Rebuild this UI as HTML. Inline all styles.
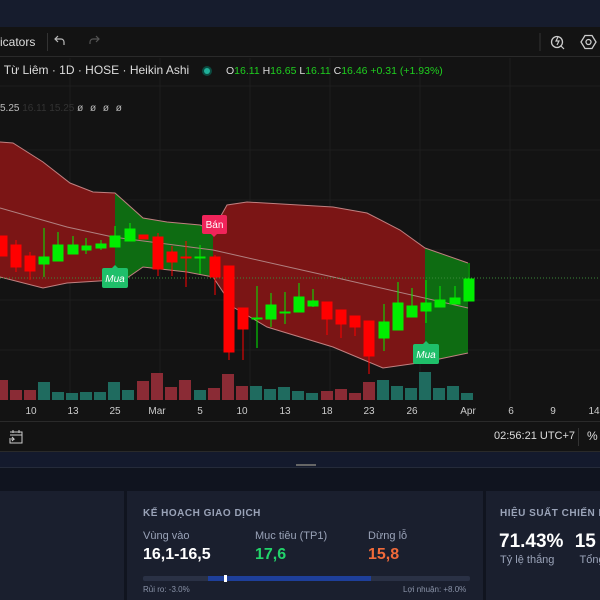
<!DOCTYPE html>
<html><head><meta charset="utf-8"><style>
*{margin:0;padding:0;box-sizing:border-box}
html,body{width:600px;height:600px;overflow:hidden}
body{background:#131313;font-family:"Liberation Sans","DejaVu Sans",sans-serif;position:relative}
.abs{position:absolute}
#wrap{position:absolute;left:0;top:0;width:600px;height:600px;overflow:hidden}
</style></head><body><div id="wrap">
<div class="abs" style="left:0;top:0;width:600px;height:27px;background:#161c2d"></div>
<div class="abs" style="left:0;top:27px;width:600px;height:30px;background:#131313;border-bottom:1px solid #2a2a2a"></div>
<div class="abs" style="left:0;top:35px;color:#ddd;font-size:12px">icators</div>
<div class="abs" style="left:47px;top:33px;width:1px;height:18px;background:#333"></div>
<svg class="abs" style="left:0;top:0" width="600" height="600">
<path d="M58 42 l-3 -3 l3 -3 M55 39 h6 a3 3 0 0 1 3 3 v3" stroke="#bbb" fill="none" stroke-width="1.2"/>
<path d="M96 36 l3 3 l-3 3 M99 39 h-6 a3 3 0 0 0 -3 3 v2" stroke="#555" fill="none" stroke-width="1.2"/>
<line x1="540" y1="33" x2="540" y2="51" stroke="#333"/>
<circle cx="557" cy="42" r="5.5" stroke="#ccc" fill="none" stroke-width="1.3"/>
<path d="M561 46 l3 3 M558 37 l-2 4 h3 l-2 4" stroke="#ccc" fill="none" stroke-width="1.2"/>
<path d="M581 42 l4 -6.5 h7 l4 6.5 l-4 6.5 h-7z" stroke="#ccc" fill="none" stroke-width="1.3"/>
<circle cx="588.5" cy="42" r="2.5" stroke="#ccc" fill="none" stroke-width="1.3"/>
<g stroke="#1e1e1e" stroke-width="1">
<line x1="0" y1="86" x2="600" y2="86"/><line x1="0" y1="150" x2="600" y2="150"/><line x1="0" y1="200" x2="600" y2="200"/><line x1="0" y1="250" x2="600" y2="250"/><line x1="0" y1="300" x2="600" y2="300"/><line x1="0" y1="350" x2="600" y2="350"/>
<line x1="70" y1="58" x2="70" y2="400"/><line x1="160" y1="58" x2="160" y2="400"/><line x1="250" y1="58" x2="250" y2="400"/><line x1="330" y1="58" x2="330" y2="400"/><line x1="420" y1="58" x2="420" y2="400"/><line x1="510" y1="58" x2="510" y2="400"/>
</g>
<path d="M0 142 L13 143 L43 162 L70 183 L93 192 L115 193 L115 280 L67 283 L43 288 L0 277Z" fill="#7b1515"/>
<path d="M115 193 L143 218 L167 222 L200 225 L213 230 L213 277 L187 272 L143 267 L127 278 L115 280Z" fill="#0e6c12"/>
<path d="M213 230 L227 205 L247 202 L333 207 L367 213 L400 230 L425 248 L425 362 L383 368 L333 347 L267 327 L233 307 L213 277Z" fill="#7b1515"/>
<path d="M425 248 L468 263 L468 353 L425 362Z" fill="#0e6c12"/>
<path d="M0 142 L13 143 L43 162 L70 183 L93 192 L115 193 L143 218 L167 222 L200 225 L213 230 L227 205 L247 202 L333 207 L367 213 L400 230 L425 248 L468 263" stroke="#c08080" fill="none" stroke-width="1"/>
<path d="M0 277 L43 288 L67 283 L115 280 L127 278 L143 267 L187 272 L213 277 L233 307 L267 327 L333 347 L383 368 L425 362 L468 353" stroke="#c08080" fill="none" stroke-width="1"/>
<path d="M0 208 L67 227 L113 237 L213 250 L333 277 L468 308" stroke="#b08080" fill="none" stroke-width="1"/>
<line x1="0" y1="278" x2="600" y2="278" stroke="#3a8a3a" stroke-dasharray="1 2"/>
<g fill="#8a2b35">
<rect x="0" y="380" width="8" height="20"/><rect x="10" y="390" width="12" height="10"/><rect x="24" y="390" width="12" height="10"/>
<rect x="137" y="381" width="12" height="19"/><rect x="151" y="373" width="12" height="27"/><rect x="165" y="387" width="12" height="13"/><rect x="179" y="380" width="12" height="20"/>
<rect x="208" y="388" width="12" height="12"/><rect x="222" y="374" width="12" height="26"/><rect x="236" y="386" width="12" height="14"/>
<rect x="321" y="391" width="12" height="9"/><rect x="335" y="389" width="12" height="11"/><rect x="349" y="393" width="12" height="7"/><rect x="363" y="382" width="12" height="18"/>
</g>
<g fill="#1f6b5f">
<rect x="38" y="382" width="12" height="18"/><rect x="52" y="392" width="12" height="8"/><rect x="66" y="393" width="12" height="7"/><rect x="80" y="392" width="12" height="8"/><rect x="94" y="392" width="12" height="8"/><rect x="108" y="382" width="12" height="18"/><rect x="122" y="390" width="12" height="10"/>
<rect x="194" y="390" width="12" height="10"/>
<rect x="250" y="386" width="12" height="14"/><rect x="264" y="389" width="12" height="11"/><rect x="278" y="387" width="12" height="13"/><rect x="292" y="391" width="12" height="9"/><rect x="306" y="393" width="12" height="7"/>
<rect x="377" y="380" width="12" height="20"/><rect x="391" y="386" width="12" height="14"/><rect x="405" y="388" width="12" height="12"/><rect x="419" y="372" width="12" height="28"/><rect x="433" y="388" width="12" height="12"/><rect x="447" y="386" width="12" height="14"/><rect x="461" y="393" width="12" height="7"/>
</g>
<g fill="#ccc" font-size="10" text-anchor="middle">
<text x="31" y="414">10</text><text x="73" y="414">13</text><text x="115" y="414">25</text><text x="157" y="414">Mar</text><text x="200" y="414">5</text><text x="242" y="414">10</text><text x="285" y="414">13</text><text x="327" y="414">18</text><text x="369" y="414">23</text><text x="412" y="414">26</text><text x="468" y="414">Apr</text><text x="511" y="414">6</text><text x="553" y="414">9</text><text x="594" y="414">14</text>
</g>
<line x1="0" y1="421.5" x2="600" y2="421.5" stroke="#2a2a2a"/>
</svg>
<div class="abs" style="left:-2px;top:63px;font-size:12px;color:#ddd;white-space:nowrap">ị Từ Liêm · 1D · HOSE · Heikin Ashi</div>
<div class="abs" style="left:202px;top:66px;width:10px;height:10px;border-radius:50%;background:#0b4a40"><div style="margin:2px;width:6px;height:6px;border-radius:50%;background:#20b09a"></div></div>
<div class="abs" style="left:226px;top:65px;font-size:10.5px;color:#ddd;white-space:nowrap">O<span style="color:#1fd01f">16.11</span> H<span style="color:#1fd01f">16.65</span> L<span style="color:#1fd01f">16.11</span> C<span style="color:#1fd01f">16.46</span> <span style="color:#1fd01f">+0.31 (+1.93%)</span></div>
<div class="abs" style="left:0;top:103px;font-size:10px;color:#bbb;white-space:nowrap">5.25 <span style="color:#333">16.11 15.25</span> <span style="letter-spacing:2px">ø ø ø ø</span></div>
<div class="abs" style="left:0;top:422px;width:600px;height:30px;background:#131313;border-bottom:1px solid #2a2a2a"></div>
<svg class="abs" style="left:0;top:422px" width="40" height="30">
<path d="M10 10 h12 v11 h-12 v-3 M10 13 h12 M13 8 v3 M19 8 v3 M9 17 h5 l-2 -2 M14 17 l-2 2" stroke="#ccc" fill="none" stroke-width="1"/>
</svg>
<div class="abs" style="left:494px;top:430px;font-size:11px;color:#ddd">02:56:21 UTC+7</div>
<div class="abs" style="left:578px;top:428px;width:1px;height:18px;background:#333"></div>
<div class="abs" style="left:587px;top:429px;font-size:12px;color:#ddd">%</div>
<div class="abs" style="left:0;top:452px;width:600px;height:15px;background:#141a2d"></div>
<div class="abs" style="left:296px;top:464px;width:20px;height:2px;background:#666"></div>
<div class="abs" style="left:0;top:467px;width:600px;height:24px;background:#10141f;border-top:1px solid #252b3a"></div>
<div class="abs" style="left:0;top:491px;width:600px;height:109px;background:#10141f"></div>
<div class="abs" style="left:0;top:491px;width:124px;height:109px;background:#1a1f2e"></div>
<div class="abs" style="left:127px;top:491px;width:356px;height:109px;background:#1a1f2e"></div>
<div class="abs" style="left:486px;top:491px;width:114px;height:109px;background:#1a1f2e;overflow:hidden">
<div class="abs" style="left:14px;top:17px;font-size:10px;font-weight:bold;color:#9aa3b8;letter-spacing:0.5px;white-space:nowrap">HIỆU SUẤT CHIẾN LƯỢC</div>
<div class="abs" style="left:13px;top:40px;font-size:19px;font-weight:bold;color:#fff;white-space:nowrap">71.43% <span style="margin-left:6px">15</span></div>
<div class="abs" style="left:14px;top:63px;font-size:11px;color:#9aa3b8;white-space:nowrap">Tỷ lệ thắng <span style="margin-left:22px">Tổng</span></div>
</div>
<div class="abs" style="left:143px;top:508px;font-size:10px;font-weight:bold;color:#9aa3b8;letter-spacing:0.5px;white-space:nowrap">KẾ HOẠCH GIAO DỊCH</div>
<div class="abs" style="left:143px;top:530px;font-size:11px;color:#9aa3b8">Vùng vào</div>
<div class="abs" style="left:255px;top:530px;font-size:11px;color:#9aa3b8">Mục tiêu (TP1)</div>
<div class="abs" style="left:368px;top:530px;font-size:11px;color:#9aa3b8">Dừng lỗ</div>
<div class="abs" style="left:143px;top:546px;font-size:16px;font-weight:bold;color:#fff">16,1-16,5</div>
<div class="abs" style="left:255px;top:546px;font-size:16px;font-weight:bold;color:#22d36a">17,6</div>
<div class="abs" style="left:368px;top:546px;font-size:16px;font-weight:bold;color:#f06a3a">15,8</div>
<div class="abs" style="left:143px;top:576px;width:327px;height:5px;background:#2a3145;border-radius:2px"></div>
<div class="abs" style="left:208px;top:576px;width:163px;height:5px;background:#1e3f9a"></div>
<div class="abs" style="left:224px;top:575px;width:3px;height:7px;background:#fff"></div>
<div class="abs" style="left:143px;top:585px;font-size:8px;color:#8a93a8">Rủi ro: -3.0%</div>
<div class="abs" style="left:403px;top:585px;font-size:8px;color:#8a93a8">Lợi nhuận: +8.0%</div>
<svg class="abs" style="left:0;top:0" width="600" height="400">
<g stroke-width="1">
<g fill="#ff0000" stroke="#ff0000">
<rect x="0" y="236" width="7" height="20"/>
<line x1="16" y1="240" x2="16" y2="272"/><rect x="11" y="245" width="10" height="22"/>
<line x1="30" y1="252" x2="30" y2="280"/><rect x="25" y="256" width="10" height="15"/>
<rect x="139" y="235" width="9" height="4"/>
<line x1="158" y1="233" x2="158" y2="276"/><rect x="153" y="237" width="10" height="32"/>
<line x1="172" y1="246" x2="172" y2="276"/><rect x="167" y="252" width="10" height="10"/>
<line x1="186" y1="241" x2="186" y2="287"/><rect x="181" y="257" width="10" height="1"/>
<line x1="215" y1="255" x2="215" y2="295"/><rect x="210" y="257" width="10" height="20"/>
<line x1="229" y1="266" x2="229" y2="360"/><rect x="224" y="266" width="10" height="86"/>
<line x1="243" y1="308" x2="243" y2="360"/><rect x="238" y="308" width="10" height="21"/>
<line x1="327" y1="302" x2="327" y2="335"/><rect x="322" y="302" width="10" height="17"/>
<line x1="341" y1="310" x2="341" y2="338"/><rect x="336" y="310" width="10" height="14"/>
<line x1="355" y1="316" x2="355" y2="336"/><rect x="350" y="316" width="10" height="11"/>
<line x1="369" y1="321" x2="369" y2="374"/><rect x="364" y="321" width="10" height="35"/>
</g>
<g fill="#00ee00" stroke="#00ee00">
<line x1="44" y1="228" x2="44" y2="277"/><rect x="39" y="257" width="10" height="7"/>
<line x1="58" y1="232" x2="58" y2="261"/><rect x="53" y="245" width="10" height="16"/>
<line x1="73" y1="236" x2="73" y2="254"/><rect x="68" y="245" width="10" height="9"/>
<line x1="86" y1="238" x2="86" y2="254"/><rect x="82" y="246" width="9" height="4"/>
<line x1="101" y1="240" x2="101" y2="250"/><rect x="96" y="244" width="10" height="4"/>
<line x1="115" y1="226" x2="115" y2="247"/><rect x="110" y="236" width="10" height="11"/>
<line x1="130" y1="223" x2="130" y2="241"/><rect x="125" y="229" width="10" height="12"/>
<line x1="200" y1="245" x2="200" y2="274"/><rect x="195" y="257" width="10" height="1"/>
<line x1="257" y1="286" x2="257" y2="348"/><rect x="252" y="318" width="10" height="1"/>
<line x1="271" y1="293" x2="271" y2="327"/><rect x="266" y="305" width="10" height="14"/>
<line x1="285" y1="292" x2="285" y2="324"/><rect x="280" y="312" width="10" height="1"/>
<line x1="299" y1="283" x2="299" y2="312"/><rect x="294" y="297" width="10" height="15"/>
<line x1="313" y1="289" x2="313" y2="307"/><rect x="308" y="301" width="10" height="5"/>
<line x1="384" y1="304" x2="384" y2="351"/><rect x="379" y="322" width="10" height="16"/>
<line x1="398" y1="282" x2="398" y2="330"/><rect x="393" y="303" width="10" height="27"/>
<line x1="412" y1="288" x2="412" y2="317"/><rect x="407" y="306" width="10" height="11"/>
<line x1="426" y1="280" x2="426" y2="323"/><rect x="421" y="303" width="10" height="8"/>
<line x1="440" y1="286" x2="440" y2="307"/><rect x="435" y="300" width="10" height="7"/>
<line x1="455" y1="286" x2="455" y2="304"/><rect x="450" y="298" width="10" height="6"/>
<line x1="469" y1="263" x2="469" y2="301"/><rect x="464" y="279" width="10" height="22"/>
</g>
</g>
<rect x="202" y="215" width="25" height="19" rx="2" fill="#f0245a"/><path d="M211 234 l3 3 l3 -3z" fill="#f0245a"/>
<text x="214.5" y="228" fill="#fff" font-size="10" text-anchor="middle">Bán</text>
<rect x="102" y="268" width="26" height="20" rx="2" fill="#1fbf6a"/><path d="M112 268 l3 -3 l3 3z" fill="#1fbf6a"/>
<text x="115" y="282" fill="#fff" font-size="10" font-style="italic" text-anchor="middle">Mua</text>
<rect x="413" y="344" width="26" height="20" rx="2" fill="#1fbf6a"/><path d="M423 344 l3 -3 l3 3z" fill="#1fbf6a"/>
<text x="426" y="358" fill="#fff" font-size="10" font-style="italic" text-anchor="middle">Mua</text>
</svg>
</div></body></html>
